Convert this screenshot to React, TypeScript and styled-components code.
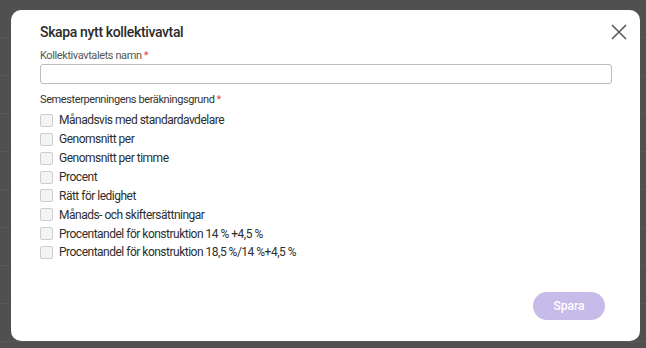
import React, { useState } from "react";
import styled, { createGlobalStyle } from "styled-components";

const GlobalStyle = createGlobalStyle`
  html, body {
    margin: 0;
    padding: 0;
    background: #505050;
  }
  body {
    font-family: "Roboto", "Noto Sans", sans-serif;
  }
`;

const Backdrop = styled.div`
  width: 646px;
  height: 348px;
  box-sizing: border-box;
  padding: 10px 6px 7px 11px;
  background: #505050;
  background-image: repeating-linear-gradient(
    to bottom,
    transparent 0,
    transparent 37px,
    #585858 37px,
    #585858 38px
  );
`;

const Modal = styled.div`
  height: 100%;
  box-sizing: border-box;
  background: #fff;
  border-radius: 10px;
  padding: 14px 12px 21px 29px;
  display: flex;
  flex-direction: column;
  color: #333;
`;

const Header = styled.div`
  display: flex;
  align-items: center;
  justify-content: space-between;
  height: 16px;
`;

const Title = styled.h2`
  margin: 0;
  font-size: 14px;
  font-weight: 500;
  letter-spacing: -0.35px;
  color: #2b2b2b;
`;

const CloseButton = styled.button`
  border: none;
  background: none;
  padding: 0;
  width: 18px;
  height: 18px;
  cursor: pointer;
  display: flex;
`;

const Field = styled.div<{ $gap: number }>`
  display: flex;
  flex-direction: column;
  margin-right: 16px;
  margin-top: ${(p) => p.$gap}px;
`;

const Label = styled.label<{ $strong?: boolean }>`
  font-size: 11px;
  letter-spacing: -0.4px;
  color: ${(p) => (p.$strong ? "#333" : "#555")};
  line-height: 15px;
`;

const Required = styled.span`
  color: #e04b4b;
  margin-left: 2px;
`;

const TextInput = styled.input`
  height: 20px;
  box-sizing: border-box;
  border: 1px solid #bcbcbc;
  border-radius: 3px;
  margin-top: 1px;
  padding: 0 6px;
  font: inherit;
  font-size: 12px;
`;

const OptionList = styled.div`
  display: flex;
  flex-direction: column;
  margin-top: 4px;
`;

const OptionRow = styled.label`
  display: flex;
  align-items: center;
  gap: 6px;
  height: 18.86px;
  font-size: 12px;
  letter-spacing: -0.5px;
  color: #2e2e2e;
  cursor: pointer;
`;

const Box = styled.span<{ $checked: boolean }>`
  flex: none;
  width: 11px;
  height: 11px;
  border: 1px solid #cdcdcd;
  border-radius: 2px;
  background: ${(p) => (p.$checked ? "#8e79d6" : "#f4f4f4")};
`;

const Footer = styled.div`
  margin-top: auto;
  display: flex;
  justify-content: flex-end;
  padding-right: 23px;
`;

const SaveButton = styled.button`
  width: 72px;
  height: 28px;
  border: none;
  border-radius: 14px;
  background: #c7bce9;
  color: #fff;
  font-family: inherit;
  font-size: 12px;
  font-weight: 500;
  cursor: not-allowed;
`;

const options = [
  "Månadsvis med standardavdelare",
  "Genomsnitt per",
  "Genomsnitt per timme",
  "Procent",
  "Rätt för ledighet",
  "Månads- och skiftersättningar",
  "Procentandel för konstruktion 14 % +4,5 %",
  "Procentandel för konstruktion 18,5 %/14 %+4,5 %",
];

const App: React.FC = () => {
  const [checked, setChecked] = useState<string[]>([]);

  const toggle = (o: string) =>
    setChecked((prev) =>
      prev.includes(o) ? prev.filter((x) => x !== o) : [...prev, o]
    );

  return (
    <>
      <GlobalStyle />
      <Backdrop>
        <Modal>
          <Header>
            <Title>Skapa nytt kollektivavtal</Title>
            <CloseButton aria-label="Stäng">
              <svg width="18" height="18" viewBox="0 0 18 18">
                <path
                  d="M2 2 L16 16 M16 2 L2 16"
                  stroke="#5a5a5a"
                  strokeWidth="1.6"
                  fill="none"
                />
              </svg>
            </CloseButton>
          </Header>
          <Field $gap={8}>
            <Label>
              Kollektivavtalets namn<Required>*</Required>
            </Label>
            <TextInput />
          </Field>
          <Field $gap={8}>
            <Label $strong>
              Semesterpenningens beräkningsgrund<Required>*</Required>
            </Label>
          </Field>
          <OptionList>
            {options.map((o) => (
              <OptionRow key={o} onClick={() => toggle(o)}>
                <Box $checked={checked.includes(o)} />
                {o}
              </OptionRow>
            ))}
          </OptionList>
          <Footer>
            <SaveButton disabled>Spara</SaveButton>
          </Footer>
        </Modal>
      </Backdrop>
    </>
  );
};

export default App;
